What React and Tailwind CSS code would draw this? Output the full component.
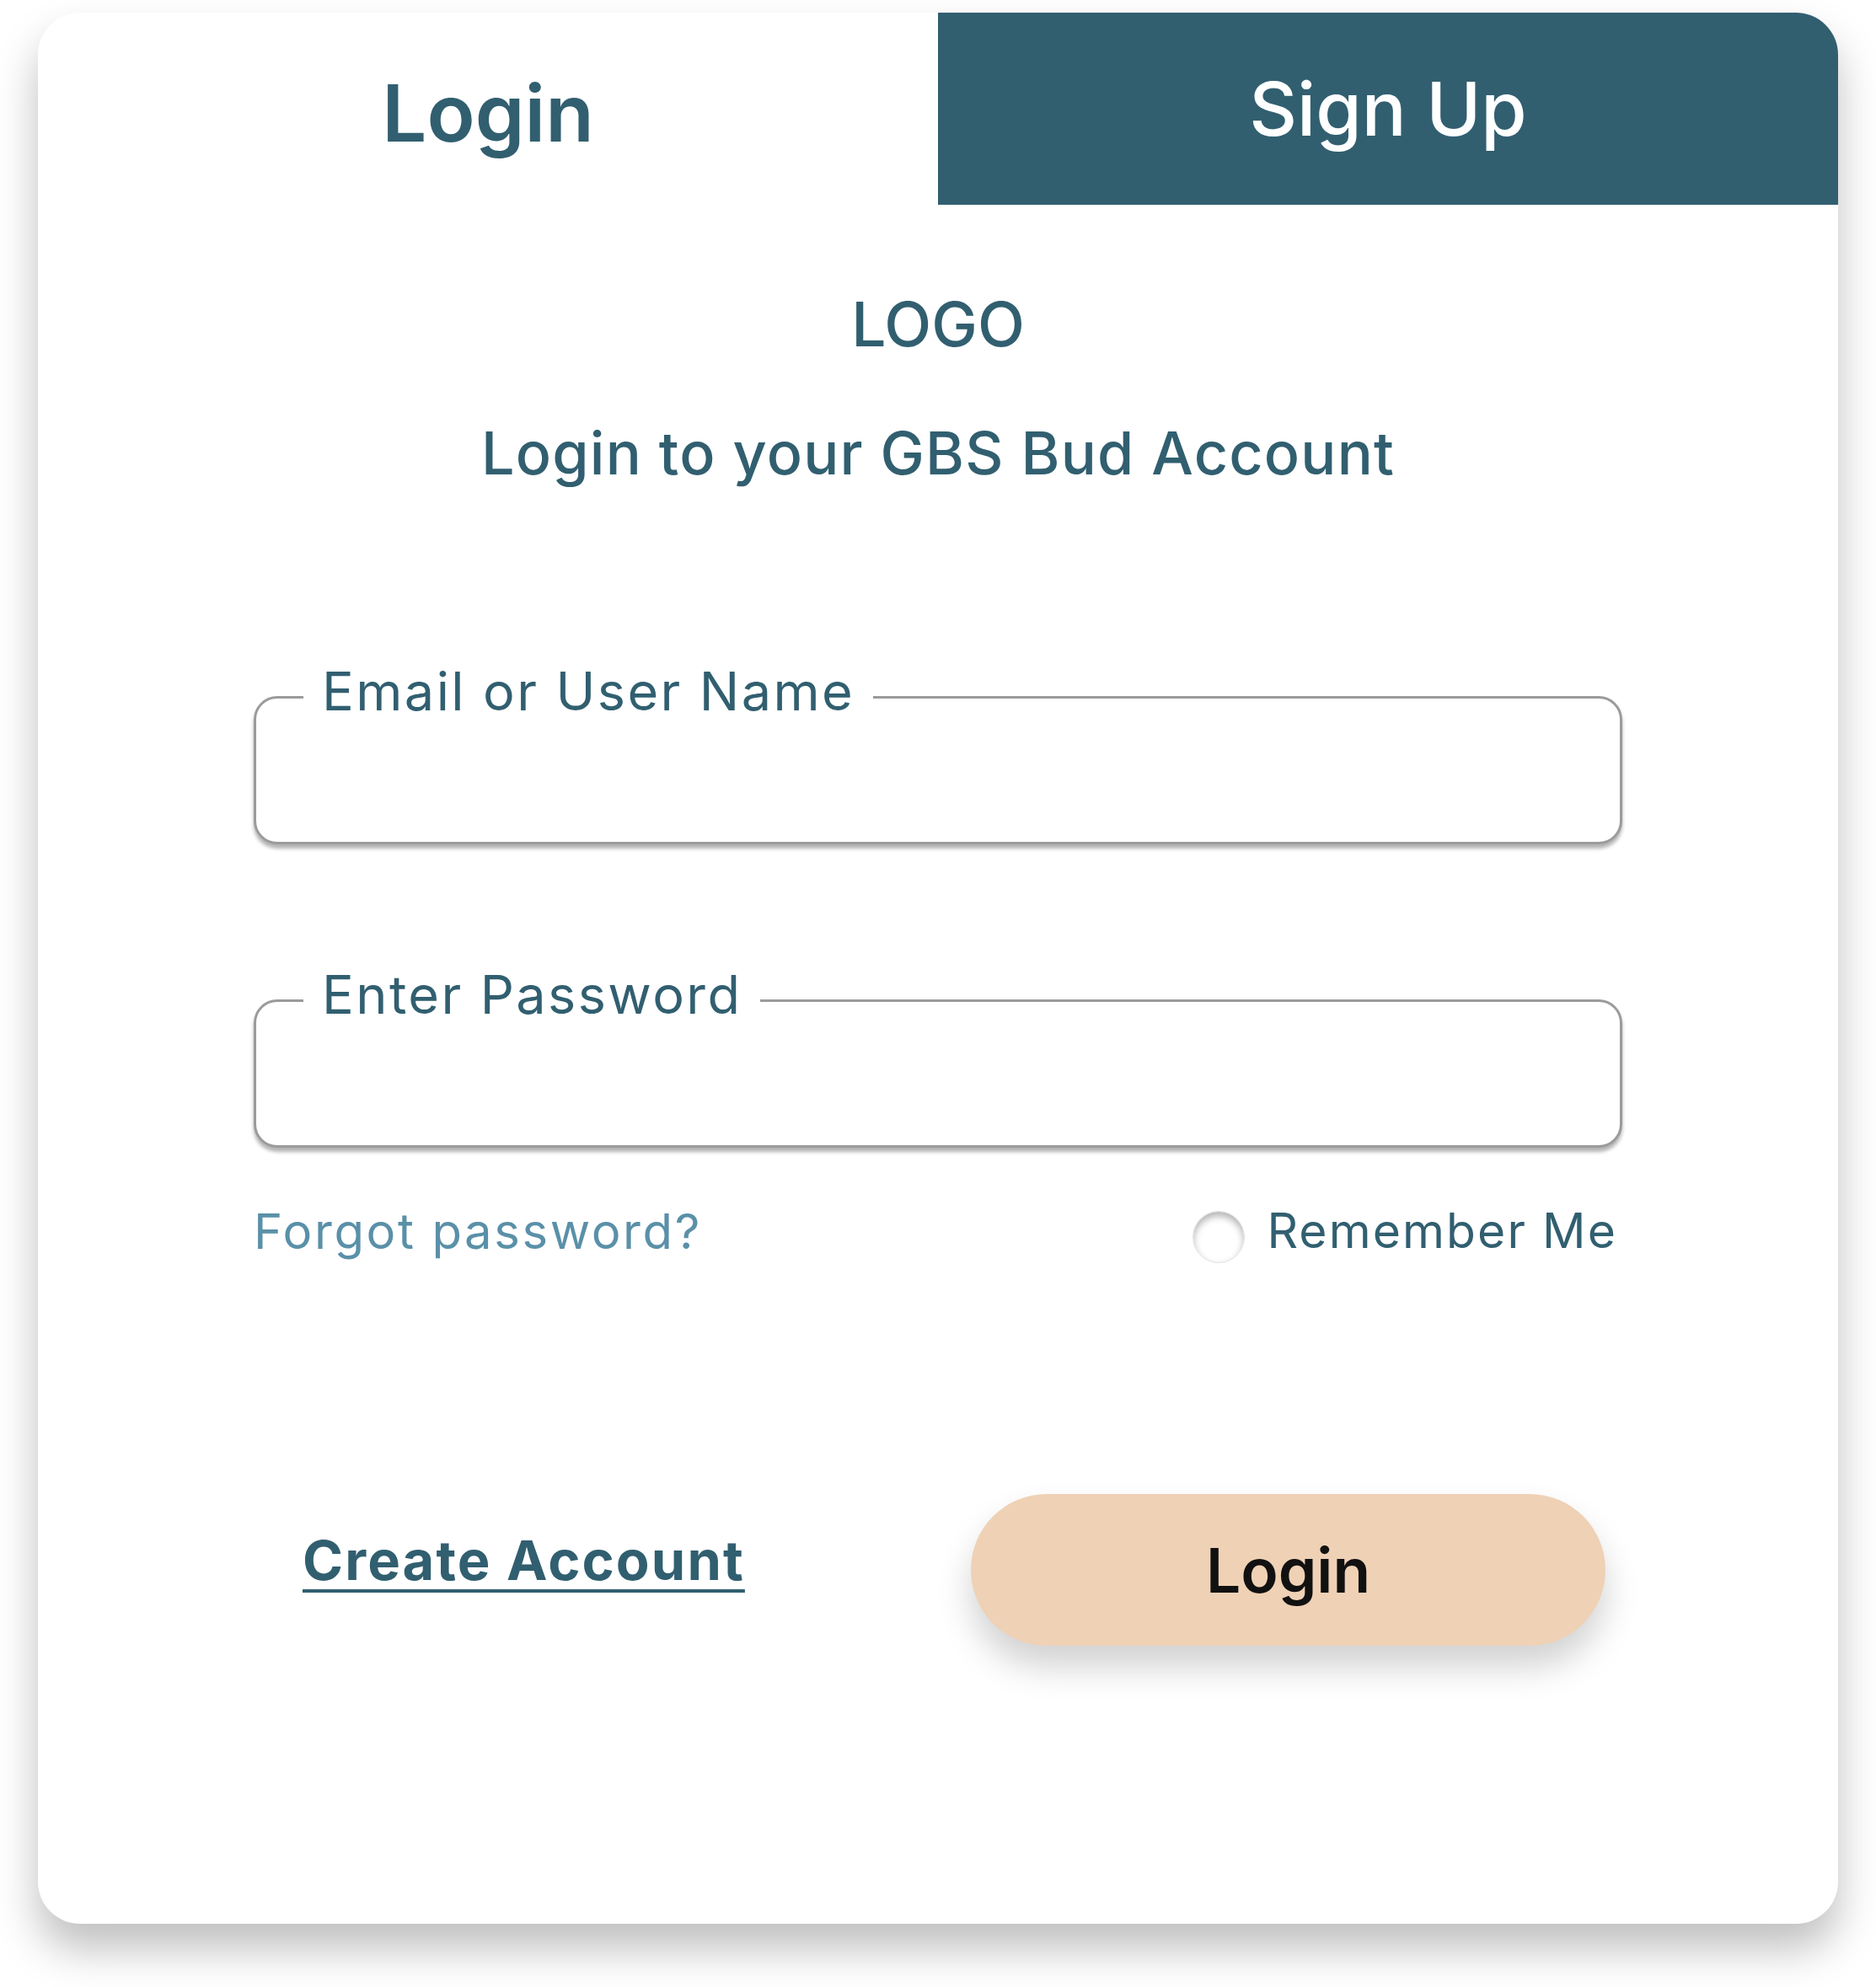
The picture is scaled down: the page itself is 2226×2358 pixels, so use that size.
import React from 'react';

function OutlinedField({ label, type = 'text' }) {
  return (
    <div className="relative h-[176px] w-full rounded-[28px] border-[3px] border-[#9b9b9b] bg-white shadow-[0_5px_4px_rgba(0,0,0,0.3)]">
      <label className="absolute -top-[40px] left-[56px] bg-white px-[22px] text-[63px] leading-none font-normal text-[#315f70] tracking-[2.4px]">
        {label}
      </label>
      <input
        type={type}
        className="h-full w-full rounded-[26px] bg-transparent px-[80px] text-[56px] text-[#315f70] outline-none"
      />
    </div>
  );
}

export default function App() {
  return (
    <div className="min-h-[2358px] bg-white px-[45px] pt-[15px] pb-[75px] font-[Inter,sans-serif]">
      <div className="h-[2268px] w-[2136px] overflow-hidden rounded-[50px] bg-white shadow-[0_30px_50px_rgba(0,0,0,0.25)]">
        {/* tabs */}
        <div className="flex h-[228px]">
          <button className="flex flex-1 items-center justify-center pt-[10px] text-[94px] leading-none font-semibold text-[#315f70]">
            Login
          </button>
          <button className="flex flex-1 items-center justify-center bg-[#315f70] text-[88px] leading-none font-medium text-white">
            Sign Up
          </button>
        </div>

        <div className="flex flex-col items-center px-[256px]">
          <h1 className="mt-[105px] text-[73px] leading-none font-medium text-[#315f70]">LOGO</h1>
          <h2 className="mt-[82px] text-[70px] leading-none font-medium tracking-[1.2px] text-[#315f70]">
            Login to your GBS Bud Account
          </h2>

          <div className="mt-[253px] w-full">
            <OutlinedField label="Email or User Name" />
          </div>
          <div className="mt-[184px] w-full">
            <OutlinedField label="Enter Password" type="password" />
          </div>

          <div className="mt-[70px] flex w-full items-start justify-between">
            <a className="text-[58px] leading-none tracking-[2.6px] text-[#5a90a8]">Forgot password?</a>
            <label className="mr-[6px] flex items-start gap-[26px]">
              <span className="mt-[5px] h-[62px] w-[62px] rounded-full border border-[#e2e2e2] bg-white shadow-[inset_0_5px_8px_rgba(0,0,0,0.3)]" />
              <span className="text-[57px] leading-none tracking-[2.1px] text-[#315f70]">Remember Me</span>
            </label>
          </div>

          <div className="mt-[274px] flex w-full items-start">
            <a className="mt-[46px] ml-[58px] text-[65px] leading-none font-bold tracking-[2.1px] text-[#315f70] underline decoration-4 underline-offset-[11px]">
              Create Account
            </a>
            <button className="mr-[20px] ml-auto flex h-[180px] w-[753px] items-center justify-center rounded-full bg-[#efd1b5] text-[73px] leading-none font-semibold text-[#111111] shadow-[0_25px_40px_rgba(0,0,0,0.18)]">
              Login
            </button>
          </div>
        </div>
      </div>
    </div>
  );
}
